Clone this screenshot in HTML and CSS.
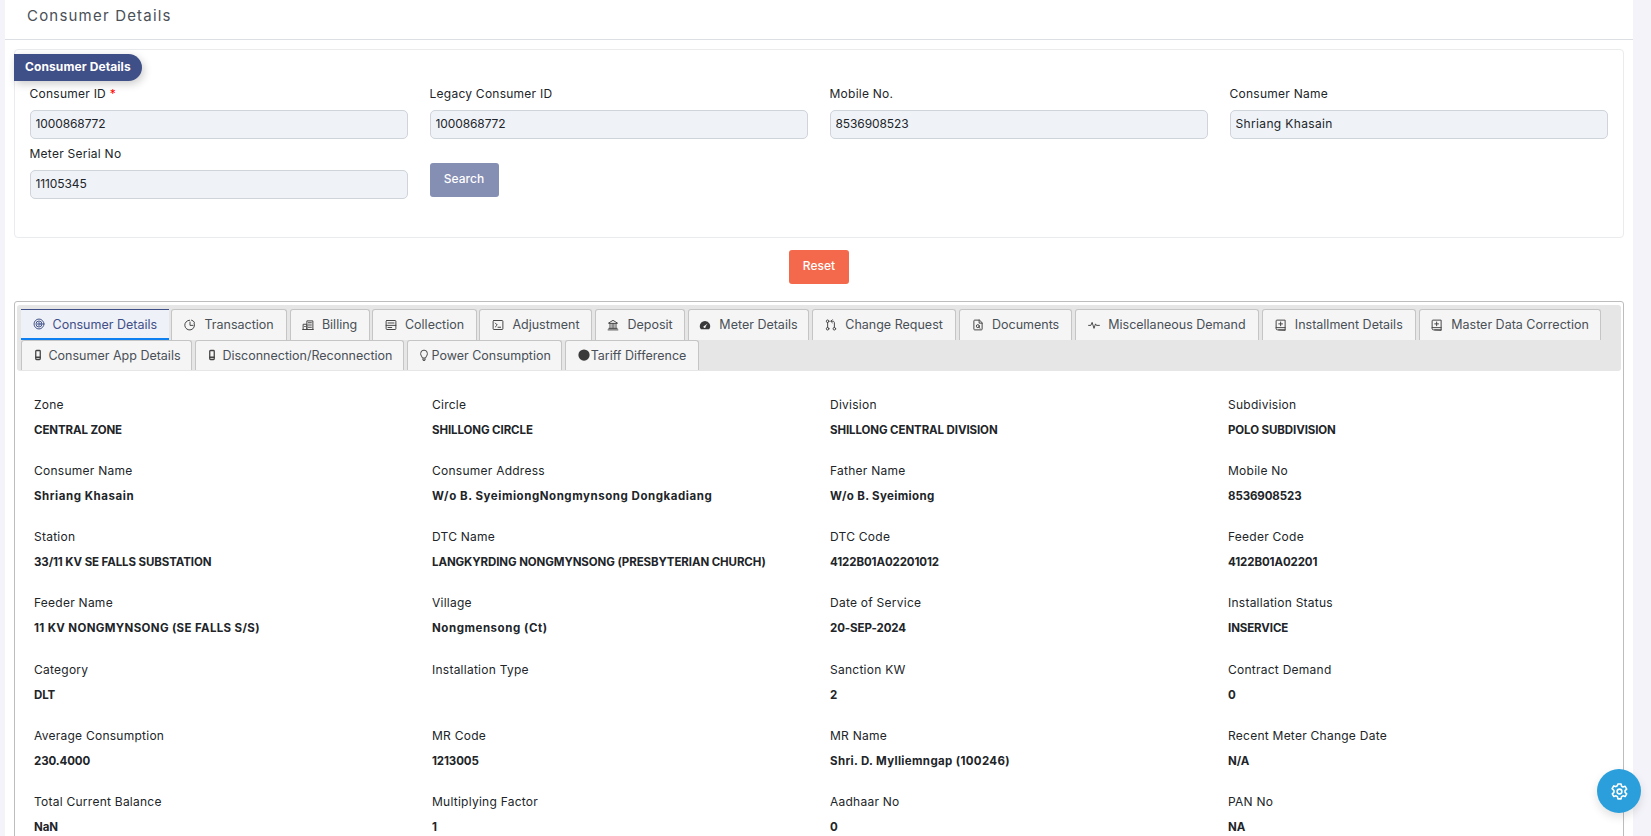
FILE: index.html
```html
<!DOCTYPE html>
<html lang="en">
<head>
<meta charset="utf-8">
<title>Consumer Details</title>
<link rel="stylesheet" href="styles.css">
</head>
<body>
<main class="main">
  <header class="page-head"><h1>Consumer Details</h1></header>
  <div class="content">
    <section class="card">
      <div class="badge">Consumer Details</div>
      <form class="form-grid">
        <div class="field"><label>Consumer ID <span class="req">*</span></label><input type="text" value="1000868772"></div>
        <div class="field"><label>Legacy Consumer ID</label><input type="text" value="1000868772"></div>
        <div class="field"><label>Mobile No.</label><input type="text" value="8536908523"></div>
        <div class="field"><label>Consumer Name</label><input class="name-input" type="text" value="Shriang Khasain"></div>
        <div class="field"><label>Meter Serial No</label><input type="text" value="11105345"></div>
        <div class="field"><button type="button" class="btn btn-search">Search</button></div>
      </form>
    </section>
    <div class="reset-row"><button type="button" class="btn btn-reset">Reset</button></div>
    <section class="panel">
      <nav class="tabs">
        <a class="tab active w1"><svg viewBox="0 0 16 16"><circle cx="8" cy="8" r="6.6"/><circle cx="8" cy="8" r="4"/><circle cx="8" cy="8" r="1.6"/></svg>Consumer Details</a>
        <a class="tab w2"><svg viewBox="0 0 16 16"><path d="M13.5 5.5A6.5 6.5 0 1 1 7.5 1.6"/><path d="M8 4v4.500h4"/><path d="M10 1.500a6 6 0 0 1 4 3"/></svg>Transaction</a>
        <a class="tab w3"><svg viewBox="0 0 16 16"><path d="M1.500 14V7h5v7M6.500 14V2.500h8V14M1 14h14M8.500 5h4M8.500 8h4M8.500 11h4M3.500 10h1"/></svg>Billing</a>
        <a class="tab w4"><svg viewBox="0 0 16 16"><rect x="1.500" y="2" width="13" height="12" rx="1"/><path d="M1.500 8.500h13M4 5.300h8M4 11.300h5"/></svg>Collection</a>
        <a class="tab w5"><svg viewBox="0 0 16 16"><rect x="1.500" y="2" width="13" height="12" rx="1"/><path d="M4.500 5.500 7 8l-2.500 2.500M8 11h3.500"/></svg>Adjustment</a>
        <a class="tab w6"><svg viewBox="0 0 16 16"><path d="M1.500 14.500h13M2.500 12.500h11M2 5.500 8 1.800l6 3.700M3 5.800h10M4 6v6M6.800 6v6M9.200 6v6M12 6v6"/></svg>Deposit</a>
        <a class="tab w7"><svg viewBox="0 0 16 16"><path class="fill" d="M8 2.500a7 7 0 0 0-7 7c0 1.500.5 2.800 1.300 3.900.2.300.5.400.8.400h9.800c.3 0 .6-.1.800-.4A7 7 0 0 0 8 2.500Zm3.500 3.400L8.900 9.800a1.500 1.500 0 1 1-1.500-.9Z"/></svg>Meter Details</a>
        <a class="tab w8"><svg viewBox="0 0 16 16"><circle cx="3.500" cy="3" r="1.700"/><circle cx="3.500" cy="13" r="1.700"/><circle cx="12.500" cy="13" r="1.700"/><path d="M3.500 4.700v6.600M12.500 11.300V5c0-1.200-.8-2-2-2H8M9.800 1 7.800 3l2 2"/></svg>Change Request</a>
        <a class="tab w9"><svg viewBox="0 0 16 16"><path d="M9.500 1.500H3.500a1 1 0 0 0-1 1v11a1 1 0 0 0 1 1h9a1 1 0 0 0 1-1v-8Z"/><path d="M9.500 1.500v4h4"/><circle cx="7.800" cy="9.500" r="2"/><path d="m9.300 11 1.500 1.500"/></svg>Documents</a>
        <a class="tab w10"><svg viewBox="0 0 16 16"><path d="M.8 8.500h3l1.700-4 2.500 8 2-6 1.200 2h4"/></svg>Miscellaneous Demand</a>
        <a class="tab w11"><svg viewBox="0 0 16 16"><path d="M3 14.500a1.500 1.500 0 0 1-1.500-1.500V2.500a1 1 0 0 1 1-1h11v13ZM1.500 11.500h12M5 14.500h8.500"/><path d="M7.500 4v5M5 6.500h5"/></svg>Installment Details</a>
        <a class="tab w12"><svg viewBox="0 0 16 16"><path d="M3 14.500a1.500 1.500 0 0 1-1.500-1.500V2.500a1 1 0 0 1 1-1h11v13ZM1.500 11.500h12M5 14.500h8.500"/><path d="M7.500 4v5M5 6.500h5"/></svg>Master Data Correction</a>
        <a class="tab w13 row2 phone"><svg viewBox="0 0 16 16"><rect class="fat" x="5" y="2" width="6" height="12" rx="1"/><path class="fat" d="M5 11h6"/></svg>Consumer App Details</a>
        <a class="tab w14 row2 phone"><svg viewBox="0 0 16 16"><rect class="fat" x="5" y="2" width="6" height="12" rx="1"/><path class="fat" d="M5 11h6"/></svg>Disconnection/Reconnection</a>
        <a class="tab w15 row2 tight"><svg viewBox="0 0 16 16"><path d="M5.800 11.500C5.500 10 3.500 9 3.500 6a4.500 4.500 0 0 1 9 0c0 3-2 4-2.300 5.500ZM6 13.500h4M7 15.200h2"/></svg>Power Consumption</a>
        <a class="tab w16 row2 tight"><svg viewBox="0 0 16 16"><circle class="solid" cx="8" cy="8" r="7.500"/></svg>Tariff Difference</a>
      </nav>
      <div class="info-grid">
        <div class="info"><span>Zone</span><b>CENTRAL ZONE</b></div>
        <div class="info"><span>Circle</span><b>SHILLONG CIRCLE</b></div>
        <div class="info"><span>Division</span><b>SHILLONG CENTRAL DIVISION</b></div>
        <div class="info"><span>Subdivision</span><b>POLO SUBDIVISION</b></div>
        <div class="info"><span>Consumer Name</span><b class="wide">Shriang Khasain</b></div>
        <div class="info"><span>Consumer Address</span><b class="wide">W/o B. SyeimiongNongmynsong Dongkadiang</b></div>
        <div class="info"><span>Father Name</span><b class="mid">W/o B. Syeimiong</b></div>
        <div class="info"><span>Mobile No</span><b>8536908523</b></div>
        <div class="info"><span>Station</span><b>33/11 KV SE FALLS SUBSTATION</b></div>
        <div class="info"><span>DTC Name</span><b>LANGKYRDING NONGMYNSONG (PRESBYTERIAN CHURCH)</b></div>
        <div class="info"><span>DTC Code</span><b>4122B01A02201012</b></div>
        <div class="info"><span>Feeder Code</span><b>4122B01A02201</b></div>
        <div class="info"><span>Feeder Name</span><b class="mid">11 KV NONGMYNSONG (SE FALLS S/S)</b></div>
        <div class="info"><span>Village</span><b class="wide">Nongmensong (Ct)</b></div>
        <div class="info"><span>Date of Service</span><b>20-SEP-2024</b></div>
        <div class="info"><span>Installation Status</span><b>INSERVICE</b></div>
        <div class="info"><span>Category</span><b>DLT</b></div>
        <div class="info"><span>Installation Type</span><b></b></div>
        <div class="info"><span>Sanction KW</span><b>2</b></div>
        <div class="info"><span>Contract Demand</span><b>0</b></div>
        <div class="info"><span>Average Consumption</span><b>230.4000</b></div>
        <div class="info"><span>MR Code</span><b>1213005</b></div>
        <div class="info"><span>MR Name</span><b class="mid">Shri. D. Mylliemngap (100246)</b></div>
        <div class="info"><span>Recent Meter Change Date</span><b>N/A</b></div>
        <div class="info"><span>Total Current Balance</span><b>NaN</b></div>
        <div class="info"><span>Multiplying Factor</span><b>1</b></div>
        <div class="info"><span>Aadhaar No</span><b>0</b></div>
        <div class="info"><span>PAN No</span><b>NA</b></div>
      </div>
    </section>
  </div>
</main>
<button type="button" class="fab" aria-label="Settings">
  <svg viewBox="0 0 24 24"><path d="M10 2.500h4l.6 2.800 1.800 1 2.700-.9 2 3.500-2.100 1.900v2.200l2.100 1.900-2 3.500-2.700-.9-1.800 1-.6 2.800h-4l-.6-2.800-1.800-1-2.700.9-2-3.500 2.100-1.900v-2.200L2.700 8.400l2-3.500 2.700.9 1.800-1Z"/><circle cx="12" cy="12" r="3"/></svg>
</button>
</body>
</html>
```
FILE: styles.css
```css
* { box-sizing: border-box; }
html, body { margin: 0; height: 836px; overflow: hidden; }
body { background: #f3f3f9; font-family: Inter, "Liberation Sans", sans-serif; color: #212529; font-size: 12px; }
.main { margin: 0 18px 0 5px; background: #fff; height: 836px; }
.page-head { height: 40px; padding: 7px 0 0 22px; border-bottom: 1px solid #dcdfe4; }
.page-head h1 { margin: 0; font-size: 15px; line-height: 18px; font-weight: 400; letter-spacing: 1.200px; color: #495057; }
.content { padding: 9px 9px 0 9px; }
.card { height: 189px; border: 1px solid #e9ebec; border-radius: 4px; padding-top: 4px; }
.badge { width: 128px; height: 27px; margin-left: -1px; background: #3f4f87; color: #fff; font-weight: 700; font-size: 12px; letter-spacing: .1px; line-height: 26px; padding-left: 11px; border-radius: 0 14px 14px 0; box-shadow: 2px 3px 8px rgba(0,0,0,.2); white-space: nowrap; }
.form-grid { display: grid; grid-template-columns: repeat(4, 378.500px); column-gap: 21.500px; row-gap: 7px; padding: 5px 0 0 14.500px; }
.field label { display: block; height: 16px; line-height: 16px; font-size: 12px; letter-spacing: .25px; margin-bottom: 8px; color: #212529; }
.req { color: #f00; }
.field input { display: block; width: 100%; height: 29px; padding: 0 5px 3px; border: 1px solid #ced4da; border-radius: 5px; background: #eff2f7; color: #212529; font: 12px Inter, "Liberation Sans", sans-serif; letter-spacing: -.1px; outline: none; }
.field .name-input { letter-spacing: .35px; }
.btn { display: block; border: 0; color: #fff; font: 500 12px Inter, "Liberation Sans", sans-serif; border-radius: 3px; padding: 0 0 3px; }
.btn-search { width: 69px; height: 34px; margin-top: 17px; background: #858eb3; }
.reset-row { display: flex; justify-content: center; margin-top: 12px; }
.btn-reset { width: 60px; height: 34px; background: #f4694b; }
.panel { margin-top: 17px; height: 600px; border: 1px solid #bdbdbd; border-radius: 3px; padding: 3px 2px 0; }
.tabs { display: flex; flex-wrap: wrap; column-gap: 2.800px; align-content: flex-start; height: 66px; padding: 4px 4px 0; background: #e6e6e6; border-radius: 3px; }
.tab { display: flex; align-items: center; justify-content: center; gap: 8px; height: 31px; padding-bottom: 1px; background: #f5f5f5; border: 1px solid #c5c5c5; border-bottom: 0; border-radius: 3px 3px 0 0; color: #495057; font-size: 12.500px; white-space: nowrap; }
.tab.row2 { height: 30px; }
.tab.tight { gap: 1px; }
.tab.phone { gap: 4px; }
.tab svg { width: 12px; height: 12px; flex: none; fill: none; stroke: #444; stroke-width: 1.300; stroke-linecap: round; stroke-linejoin: round; }
.tab svg .fill, .tab svg .solid { fill: #3a3a3a; stroke: none; }
.tab svg .fat { stroke-width: 1.700; }
.tab.active { background: #eef1f7; color: #3f4f87; border: 0; border-top: 1px solid #3f4f87; border-bottom: 2px solid #0d7ff0; border-radius: 0; padding-bottom: 0; }
.tab.active svg { stroke: #3f4f87; }
.w1 { width: 147.600px; } .w2 { width: 115.400px; } .w3 { width: 80px; } .w4 { width: 104.300px; }
.w5 { width: 113px; } .w6 { width: 89.600px; } .w7 { width: 121.600px; } .w8 { width: 144px; }
.w9 { width: 113.500px; } .w10 { width: 183.600px; } .w11 { width: 154.500px; } .w12 { width: 182.400px; }
.w13 { width: 171px; } .w14 { width: 209.300px; } .w15 { width: 155.500px; } .w16 { width: 133.600px; }
.info-grid { display: grid; grid-template-columns: repeat(4, 398px); grid-auto-rows: 66.150px; padding: 26px 0 0 17px; }
.info span, .info b { display: block; line-height: 16px; font-size: 12px; }
.info span { letter-spacing: .25px; }
.info b { margin-top: 9px; font-weight: 700; font-size: 11.500px; letter-spacing: -.1px; }
.info b.mid { letter-spacing: .35px; }
.info b.wide { letter-spacing: .55px; }
.fab { position: fixed; left: 1597px; top: 769px; width: 44px; height: 44px; border: 0; padding: 0; border-radius: 50%; background: #2a9fdb; display: flex; align-items: center; justify-content: center; box-shadow: 0 4px 10px rgba(0,0,0,.12); }
.fab svg { width: 19px; height: 19px; fill: none; stroke: #fff; stroke-width: 2; stroke-linejoin: round; }
```
